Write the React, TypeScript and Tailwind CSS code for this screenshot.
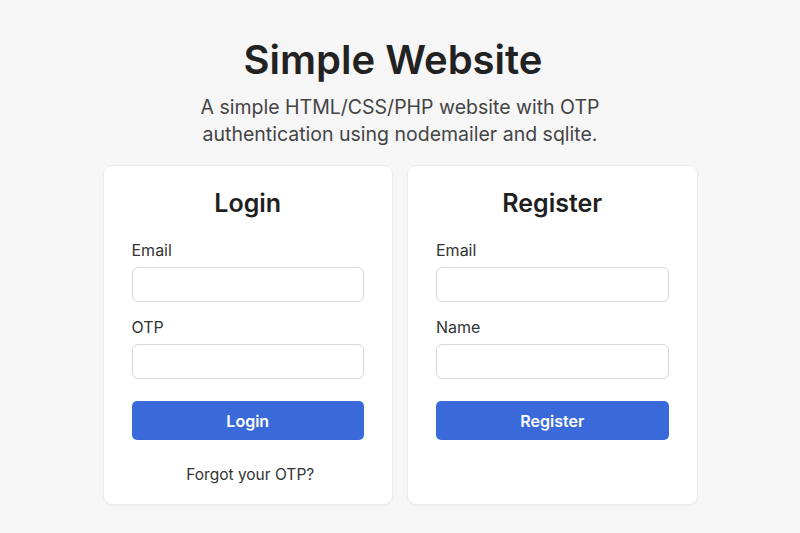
import React from "react";

function Field({ label, type = "text" }: { label: string; type?: string }) {
  return (
    <div className="flex flex-col">
      <label className="text-[16px] leading-[24px] text-[#333]">{label}</label>
      <input
        type={type}
        className="mt-[5px] h-[35px] w-full rounded-[6px] border border-[#d9d9d9] bg-white px-3 text-[15px] outline-none"
      />
    </div>
  );
}

function Card({
  title,
  children,
}: {
  title: string;
  children: React.ReactNode;
}) {
  return (
    <div className="flex flex-col rounded-[8px] bg-white px-[28px] pb-[17px] pt-[20px] shadow-[0_1px_3px_rgba(0,0,0,0.08)] ring-1 ring-[#ececec]">
      <h2 className="text-center text-[25px] font-semibold leading-[34px] text-[#1f1f1f]">
        {title}
      </h2>
      {children}
    </div>
  );
}

export default function App() {
  return (
    <div
      className="flex min-h-[533px] flex-col items-center bg-[#f6f6f6] pt-[36px]"
      style={{ fontFamily: "Inter, 'Noto Sans', sans-serif" }}
    >
      <h1 className="pr-[14px] text-[40px] font-semibold leading-[48px] text-[#222]">
        Simple Website
      </h1>
      <p className="mt-[10px] max-w-[440px] text-center text-[19.5px] leading-[27px] text-[#444]">
        A simple HTML/CSS/PHP website with OTP authentication using nodemailer
        and sqlite.
      </p>

      <div className="mt-[18px] grid w-[593px] grid-cols-2 gap-[16px]">
        <Card title="Login">
          <div className="mt-[18px]">
            <Field label="Email" type="email" />
          </div>
          <div className="mt-[13px]">
            <Field label="OTP" />
          </div>
          <button className="mt-[22px] h-[39px] w-full rounded-[5px] bg-[#3a6ad9] text-[16px] font-semibold text-white">
            Login
          </button>
          <p className="mt-[23px] pl-[5px] text-center text-[15.5px] leading-[24px] text-[#333]">
            Forgot your OTP?
          </p>
        </Card>
        <Card title="Register">
          <div className="mt-[18px]">
            <Field label="Email" type="email" />
          </div>
          <div className="mt-[13px]">
            <Field label="Name" />
          </div>
          <button className="mt-[22px] h-[39px] w-full rounded-[5px] bg-[#3a6ad9] text-[16px] font-semibold text-white">
            Register
          </button>
        </Card>
      </div>
    </div>
  );
}
